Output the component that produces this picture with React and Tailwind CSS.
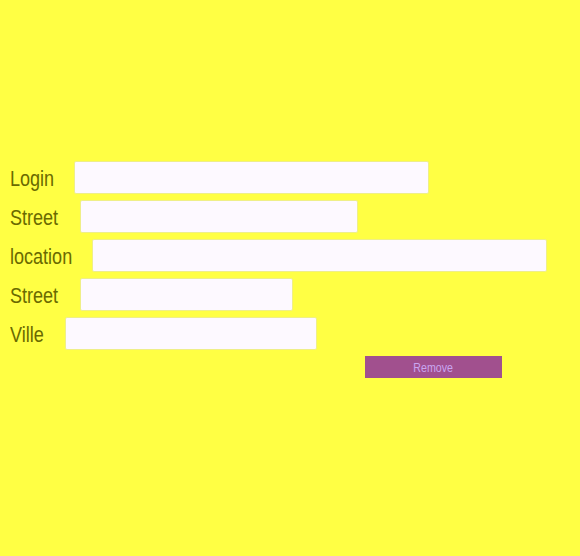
import React from 'react';

const rows = [
    { label: 'Login', labelWidth: 'w-[44px]', width: 'w-[355px]' },
    { label: 'Street', labelWidth: 'w-[50px]', width: 'w-[278px]' },
    { label: 'location', labelWidth: 'w-[62px]', width: 'w-[455px]' },
    { label: 'Street', labelWidth: 'w-[50px]', width: 'w-[213px]' },
    { label: 'Ville', labelWidth: 'w-[35px]', width: 'w-[252px]' },
];

export default function App() {
    return (
        <div className="w-[580px] h-[556px] bg-[#ffff44] pt-[161px] pl-[10px] font-['Liberation_Sans',Arial,sans-serif]">
            <div className="flex flex-col gap-[6px]">
                {rows.map((row, i) => (
                    <div key={i} className="flex items-center gap-[20px]">
                        <div className={`${row.labelWidth} shrink-0 whitespace-nowrap text-[22px] leading-none pt-[3px]`}>
                            <span className="block origin-left scale-x-[0.82] text-[#6a6a00]">
                                {row.label}
                            </span>
                        </div>
                        <input
                            type="text"
                            className={`${row.width} h-[33px] bg-[#fdf9ff] border border-[#efef88] rounded-[2px] outline-none`}
                        />
                    </div>
                ))}
            </div>
            <div className="flex mt-[6px] pl-[355px]">
                <button className="flex items-center justify-center w-[137px] h-[22px] bg-[#a1508e] pt-[1px]">
                    <span className="block scale-x-[0.82] text-[13px] leading-none text-[#c9a6f0]">Remove</span>
                </button>
            </div>
        </div>
    );
}
